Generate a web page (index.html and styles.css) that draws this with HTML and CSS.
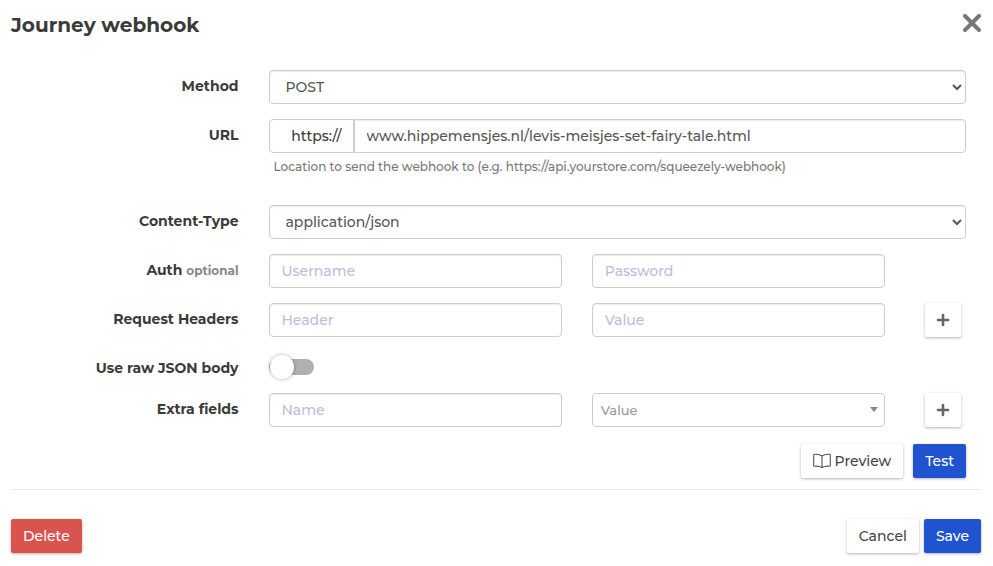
FILE: index.html
```html
<!DOCTYPE html>
<html lang="en">
<head>
    <meta charset="UTF-8">
    <meta name="viewport" content="width=device-width, initial-scale=1.0">
    <title>Journey webhook</title>
    <link rel="stylesheet" href="styles.css">
</head>
<body>
    <form class="modal">
        <div class="modal-header">
            <h1>Journey webhook</h1>
            <button type="button" class="close" aria-label="Close">
                <svg width="18" height="18" viewBox="0 0 18 18"><path d="M2 2L16 16M16 2L2 16" stroke="#777" stroke-width="4" stroke-linecap="round"/></svg>
            </button>
        </div>

        <div class="modal-body">
            <div class="form-row">
                <label for="method">Method</label>
                <div class="field wide">
                    <select id="method" class="form-control">
                        <option>POST</option>
                        <option>GET</option>
                    </select>
                </div>
            </div>

            <div class="form-row">
                <label for="url">URL</label>
                <div class="field wide">
                    <div class="input-group">
                        <span class="input-addon">https://</span>
                        <input type="text" id="url" class="form-control" value="www.hippemensjes.nl/levis-meisjes-set-fairy-tale.html">
                    </div>
                    <p class="help">Location to send the webhook to (e.g. https://api.yourstore.com/squeezely-webhook)</p>
                </div>
            </div>

            <div class="form-row">
                <label for="content-type">Content-Type</label>
                <div class="field wide">
                    <select id="content-type" class="form-control">
                        <option>application/json</option>
                    </select>
                </div>
            </div>

            <div class="form-row">
                <label for="username">Auth <small>optional</small></label>
                <div class="field"><input type="text" id="username" class="form-control" placeholder="Username"></div>
                <div class="field"><input type="password" class="form-control" placeholder="Password" aria-label="Password"></div>
            </div>

            <div class="form-row">
                <label for="header">Request Headers</label>
                <div class="field"><input type="text" id="header" class="form-control" placeholder="Header"></div>
                <div class="field"><input type="text" class="form-control" placeholder="Value" aria-label="Header value"></div>
                <button type="button" class="btn btn-add" aria-label="Add header">
                    <svg width="14" height="14" viewBox="0 0 14 14"><path d="M7 2V12M2 7H12" stroke="#666" stroke-width="2.6" stroke-linecap="round"/></svg>
                </button>
            </div>

            <div class="form-row">
                <label for="raw-json">Use raw JSON body</label>
                <div class="field"><input type="checkbox" id="raw-json" class="switch"></div>
            </div>

            <div class="form-row">
                <label for="extra-name">Extra fields</label>
                <div class="field"><input type="text" id="extra-name" class="form-control" placeholder="Name"></div>
                <div class="field">
                    <div class="combo">
                        <select class="form-control" aria-label="Extra field value">
                            <option>Value</option>
                        </select>
                    </div>
                </div>
                <button type="button" class="btn btn-add" aria-label="Add field">
                    <svg width="14" height="14" viewBox="0 0 14 14"><path d="M7 2V12M2 7H12" stroke="#666" stroke-width="2.6" stroke-linecap="round"/></svg>
                </button>
            </div>

            <div class="actions">
                <button type="button" class="btn">
                    <svg width="18" height="16" viewBox="0 0 18 16" fill="none" stroke="#555" stroke-width="1.1" stroke-linejoin="round"><path d="M9 3C7 1.5 4 1 1.5 1.3C1 1.4 .7 1.7 .7 2.2V12.4C.7 13 1 13.3 1.6 13.2C4.3 12.9 7 13.3 9 14.6C11 13.3 13.7 12.9 16.4 13.2C17 13.3 17.3 13 17.3 12.4V2.2C17.3 1.7 17 1.4 16.5 1.3C14 1 11 1.5 9 3ZM9 3V14.6"/></svg>
                    Preview
                </button>
                <button type="button" class="btn btn-primary">Test</button>
            </div>
        </div>

        <div class="modal-footer">
            <button type="button" class="btn btn-danger">Delete</button>
            <div class="footer-right">
                <button type="button" class="btn">Cancel</button>
                <button type="submit" class="btn btn-primary">Save</button>
            </div>
        </div>
    </form>
</body>
</html>
```

FILE: styles.css
```css
* {
    box-sizing: border-box;
}

body {
    margin: 0;
    background-color: #fff;
    color: #3a3a3a;
    font-family: Montserrat, Inter, sans-serif;
    font-size: 14px;
    font-weight: 500;
    line-height: 20px;
}

.modal {
    padding: 10px 12px 12px 11px;
}

.modal-header {
    display: flex;
    justify-content: space-between;
    align-items: flex-start;
}

h1 {
    margin: 0;
    font-size: 20px;
    line-height: 30px;
    font-weight: 700;
}

.close {
    display: flex;
    padding: 4px 0;
    border: none;
    background: none;
    cursor: pointer;
}

.modal-body {
    display: flex;
    flex-direction: column;
    gap: 15px;
    padding: 30px 0 11px;
    border-bottom: 1px solid #eaeaea;
}

/* label, two fields and a button on a 12 column base */
.form-row {
    display: grid;
    grid-template-columns: 3fr 4fr 4fr 1fr;
    align-items: start;
}

.form-row label {
    padding: 6px 15px 0 0;
    text-align: right;
    font-weight: 700;
}

label small {
    color: #888;
    font-size: 12px;
}

.field {
    min-width: 0;
    padding: 0 15px;
}

.wide {
    grid-column: span 3;
}

.form-control {
    display: block;
    width: 100%;
    height: 34px;
    padding: 6px 12px;
    border: 1px solid #ccc;
    border-radius: 4px;
    background-color: #fff;
    box-shadow: inset 0 1px 1px rgba(0, 0, 0, 0.075);
    color: #555;
    font-family: inherit;
    font-size: 14px;
    font-weight: 500;
}

.form-control::placeholder {
    color: #b9bfd6;
    opacity: 1;
}

.input-group {
    display: flex;
}

.input-group .form-control {
    border-radius: 0 4px 4px 0;
}

.input-addon {
    flex: none;
    width: 85px;
    padding: 6px 11px;
    border: 1px solid #ccc;
    border-radius: 4px 0 0 4px;
    text-align: right;
}

.help {
    margin: 0;
    padding: 4px 5px 13px;
    color: #777;
    font-size: 12px;
}

.switch {
    appearance: none;
    position: relative;
    display: block;
    width: 45px;
    height: 16px;
    margin: 7px 0 3px;
    border-radius: 8px;
    background-color: #b0b0b0;
    cursor: pointer;
}

.switch::before {
    content: "";
    position: absolute;
    top: -4px;
    left: 1px;
    width: 24px;
    height: 24px;
    border-radius: 50%;
    background-color: #fff;
    box-shadow: 0 0 4px rgba(0, 0, 0, 0.3);
}

.switch:checked {
    background-color: #1f53cf;
}

.switch:checked::before {
    left: 21px;
}

.combo {
    position: relative;
}

.combo .form-control {
    appearance: none;
    padding: 6px 8px;
    box-shadow: none;
    color: #999;
    font-size: 13px;
}

.combo::after {
    content: "";
    position: absolute;
    top: 14px;
    right: 7px;
    border: 4px solid transparent;
    border-top: 5px solid #888;
    border-bottom: 0;
    pointer-events: none;
}

.btn {
    display: inline-flex;
    align-items: center;
    justify-content: center;
    gap: 4px;
    height: 34px;
    padding: 0 12px;
    border: none;
    border-radius: 2px;
    background-color: #fff;
    box-shadow: 0 1px 3px rgba(0, 0, 0, 0.3);
    color: #444;
    font-family: inherit;
    font-size: 14px;
    font-weight: 500;
    cursor: pointer;
}

.btn-primary {
    background-color: #1f53cf;
    color: #fff;
}

.btn-danger {
    background-color: #d9534f;
    color: #fff;
}

.btn-add {
    justify-self: end;
    width: 36px;
    margin-right: 20px;
    padding: 0;
}

.actions {
    display: flex;
    justify-content: flex-end;
    gap: 10px;
    padding: 2px 15px 0;
}

.modal-footer {
    display: flex;
    justify-content: space-between;
    padding-top: 29px;
}

.footer-right {
    display: flex;
    gap: 5px;
}
```
